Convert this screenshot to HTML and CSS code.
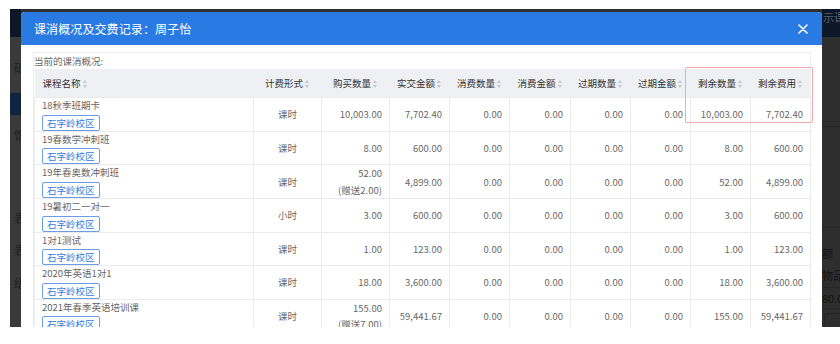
FILE: index.html
```html
<!DOCTYPE html>
<html>

<head>
    <title>课消概况及交费记录</title>
    <link rel="stylesheet" href="styles.css">
</head>

<body>
    <div class="screen">
        <div class="side side-left">
            <div class="side-nav"></div>
            <div class="side-block side-block-a"><span class="ghost">础</span></div>
            <div class="side-band"></div>
            <div class="side-block side-block-b">
                <span class="ghost g1">馈</span>
                <span class="ghost g2">表</span>
                <span class="ghost g3">表</span>
                <span class="ghost g4">级</span>
            </div>
        </div>

        <div class="modal">
            <div class="modal-head">
                <span class="modal-title">课消概况及交费记录：周子怡</span>
                <svg class="modal-close" width="10" height="10" viewBox="0 0 10 10">
                    <path d="M1 1L9 9M9 1L1 9" stroke="#fff" stroke-width="1.6" stroke-linecap="round" />
                </svg>
            </div>
            <div class="modal-body">
                <div class="panel">
                    <div class="panel-caption">当前的课消概况:</div>
                    <table class="grid">
                        <colgroup>
                            <col style="width:219px">
                            <col style="width:68px">
                            <col style="width:68px">
                            <col style="width:60px">
                            <col style="width:60px">
                            <col style="width:61px">
                            <col style="width:60px">
                            <col style="width:60px">
                            <col style="width:60px">
                            <col style="width:60px">
                        </colgroup>
                        <thead>
                            <tr>
                                <th class="th-left">课程名称<i class="sort"></i></th>
                                <th>计费形式<i class="sort"></i></th>
                                <th>购买数量<i class="sort"></i></th>
                                <th>实交金额<i class="sort"></i></th>
                                <th>消费数量<i class="sort"></i></th>
                                <th>消费金额<i class="sort"></i></th>
                                <th>过期数量<i class="sort"></i></th>
                                <th>过期金额<i class="sort"></i></th>
                                <th>剩余数量<i class="sort"></i></th>
                                <th>剩余费用<i class="sort"></i></th>
                            </tr>
                        </thead>
                        <tbody>
                            <tr>
                                <td class="name"><div class="course">18秋季班期卡</div><span class="tag">石字岭校区</span></td>
                                <td class="mid">课时</td>
                                <td class="num">10,003.00</td>
                                <td class="num">7,702.40</td>
                                <td class="num">0.00</td>
                                <td class="num">0.00</td>
                                <td class="num">0.00</td>
                                <td class="num">0.00</td>
                                <td class="num">10,003.00</td>
                                <td class="num">7,702.40</td>
                            </tr>
                            <tr>
                                <td class="name"><div class="course">19春数学冲刺班</div><span class="tag">石字岭校区</span></td>
                                <td class="mid">课时</td>
                                <td class="num">8.00</td>
                                <td class="num">600.00</td>
                                <td class="num">0.00</td>
                                <td class="num">0.00</td>
                                <td class="num">0.00</td>
                                <td class="num">0.00</td>
                                <td class="num">8.00</td>
                                <td class="num">600.00</td>
                            </tr>
                            <tr>
                                <td class="name"><div class="course">19年春奥数冲刺班</div><span class="tag">石字岭校区</span></td>
                                <td class="mid">课时</td>
                                <td class="num two">52.00<br>(赠送2.00)</td>
                                <td class="num">4,899.00</td>
                                <td class="num">0.00</td>
                                <td class="num">0.00</td>
                                <td class="num">0.00</td>
                                <td class="num">0.00</td>
                                <td class="num">52.00</td>
                                <td class="num">4,899.00</td>
                            </tr>
                            <tr>
                                <td class="name"><div class="course">19暑初二一对一</div><span class="tag">石字岭校区</span></td>
                                <td class="mid">小时</td>
                                <td class="num">3.00</td>
                                <td class="num">600.00</td>
                                <td class="num">0.00</td>
                                <td class="num">0.00</td>
                                <td class="num">0.00</td>
                                <td class="num">0.00</td>
                                <td class="num">3.00</td>
                                <td class="num">600.00</td>
                            </tr>
                            <tr>
                                <td class="name"><div class="course">1对1测试</div><span class="tag">石字岭校区</span></td>
                                <td class="mid">课时</td>
                                <td class="num">1.00</td>
                                <td class="num">123.00</td>
                                <td class="num">0.00</td>
                                <td class="num">0.00</td>
                                <td class="num">0.00</td>
                                <td class="num">0.00</td>
                                <td class="num">1.00</td>
                                <td class="num">123.00</td>
                            </tr>
                            <tr>
                                <td class="name"><div class="course">2020年英语1对1</div><span class="tag">石字岭校区</span></td>
                                <td class="mid">课时</td>
                                <td class="num">18.00</td>
                                <td class="num">3,600.00</td>
                                <td class="num">0.00</td>
                                <td class="num">0.00</td>
                                <td class="num">0.00</td>
                                <td class="num">0.00</td>
                                <td class="num">18.00</td>
                                <td class="num">3,600.00</td>
                            </tr>
                            <tr>
                                <td class="name"><div class="course">2021年春季英语培训课</div><span class="tag">石字岭校区</span></td>
                                <td class="mid">课时</td>
                                <td class="num two">155.00<br>(赠送7.00)</td>
                                <td class="num">59,441.67</td>
                                <td class="num">0.00</td>
                                <td class="num">0.00</td>
                                <td class="num">0.00</td>
                                <td class="num">0.00</td>
                                <td class="num">155.00</td>
                                <td class="num">59,441.67</td>
                            </tr>
                        </tbody>
                    </table>
                </div>
            </div>
        </div>

        <div class="side side-right">
            <div class="side-nav"><span class="nav-text">示课</span></div>
            <div class="r-block r1"></div>
            <div class="r-block r2"></div>
            <div class="r-text r3">额</div>
            <div class="r-text r4">物品</div>
            <div class="r-text r5">80.0</div>
            <div class="r-text r6"></div>
        </div>

        <!-- annotation box drawn over the table -->
        <div class="mark"></div>
    </div>
</body>

</html>
```

FILE: styles.css
```css
body {
    margin: 0;
    background-color: white;
    font-family: "Noto Sans CJK SC", "Noto Sans", sans-serif;
}

.screen {
    position: relative;
    display: flex;
    width: 830px;
    height: 318px;
    margin: 9px 0 0 10px;
    overflow: hidden;
    background-color: #303030;
}

/* dimmed page behind the dialog */
.side {
    flex: none;
    display: flex;
    flex-direction: column;
    overflow: hidden;
}

.side-left {
    width: 11px;
    background-color: #3a3a3a;
}

.side-right {
    width: 18px;
    background-color: #2e2e2e;
}

.side-nav {
    height: 28px;
    flex: none;
    background-color: #0c1727;
}

.side-band {
    height: 22px;
    flex: none;
    background-color: #0f2544;
}

.side-block-a {
    height: 56px;
    flex: none;
    padding-top: 24px;
    box-sizing: border-box;
}

.side-block-b {
    flex: 1;
    display: flex;
    flex-direction: column;
}

.ghost {
    display: block;
    margin-left: 4px;
    font-size: 12px;
    line-height: 14px;
    color: #1f1f1f;
}

.g1 {
    margin-top: 13px;
}

.g2 {
    margin-top: 69px;
}

.g3 {
    margin-top: 18px;
}

.g4 {
    margin-top: 19px;
}

.nav-text {
    display: block;
    margin-top: 1px;
    margin-left: 1px;
    font-size: 11px;
    line-height: 14px;
    color: #5a6372;
    white-space: nowrap;
}

.r-block {
    flex: none;
    border-bottom: 1px solid #262626;
}

.r1 {
    height: 89px;
}

.r2 {
    height: 100px;
}

.r-text {
    flex: none;
    font-size: 11px;
    color: #141414;
    white-space: nowrap;
}

.r3 {
    margin-top: 17px;
    line-height: 16px;
}

.r4 {
    margin-top: 6px;
    line-height: 16px;
    padding-bottom: 4px;
    border-bottom: 1px solid #262626;
}

.r5 {
    line-height: 20px;
    border-bottom: 1px solid #262626;
}

.r6 {
    height: 16px;
    margin-top: 4px;
    margin-left: 2px;
    border-left: 1px solid #262626;
    border-top: 1px solid #262626;
}

/* dialog */
.modal {
    flex: none;
    width: 801px;
    margin-top: 3px;
    background-color: white;
    border-radius: 4px 4px 0 0;
    overflow: hidden;
}

.modal-head {
    height: 33px;
    display: flex;
    align-items: center;
    justify-content: space-between;
    padding: 0 14px 0 13px;
    background-color: #2a7ae3;
}

.modal-title {
    font-size: 12px;
    color: white;
    letter-spacing: 0.1px;
}

.modal-close {
    display: block;
    margin-top: 1px;
}

.modal-body {
    padding: 7px 11px 0 12px;
}

.panel {
    border: 1px solid #ebedf0;
    border-bottom: none;
}

.panel-caption {
    height: 16px;
    line-height: 16px;
    font-size: 9.5px;
    color: #666;
}

.grid {
    width: 100%;
    table-layout: fixed;
    border-collapse: collapse;
    font-size: 9.5px;
    color: #666;
}

.grid th {
    height: 28px;
    padding: 0;
    background-color: #eef0f4;
    font-weight: normal;
    color: #333;
    text-align: center;
    white-space: nowrap;
}

.grid .th-left {
    text-align: left;
    padding-left: 8px;
}

.sort {
    display: inline-block;
    position: relative;
    width: 5px;
    height: 8px;
    margin-left: 2px;
    vertical-align: -1px;
}

.sort::before,
.sort::after {
    content: "";
    position: absolute;
    left: 0;
    border-left: 2.5px solid transparent;
    border-right: 2.5px solid transparent;
}

.sort::before {
    top: 0;
    border-bottom: 3px solid #c6c9cf;
}

.sort::after {
    bottom: 0;
    border-top: 3px solid #c6c9cf;
}

.grid td {
    height: 32px;
    padding: 0 7px;
    border: 1px solid #ebebeb;
    white-space: nowrap;
    box-sizing: border-box;
}

.grid td.name {
    vertical-align: top;
    padding-top: 1px;
}

.course {
    height: 13.5px;
    line-height: 13.5px;
    color: #666;
}

.tag {
    display: block;
    width: max-content;
    margin-top: 2px;
    padding: 0 4px;
    line-height: 14px;
    border: 1px solid #6a9de6;
    border-radius: 2px;
    color: #3579dd;
    font-size: 9.5px;
}

.mid {
    text-align: center;
}

.num {
    text-align: right;
}

.two {
    line-height: 16.5px;
}

.mark {
    position: absolute;
    left: 675px;
    top: 58px;
    width: 126px;
    height: 54px;
    border: 1px solid #f2a9a9;
    border-radius: 2px;
}
```
